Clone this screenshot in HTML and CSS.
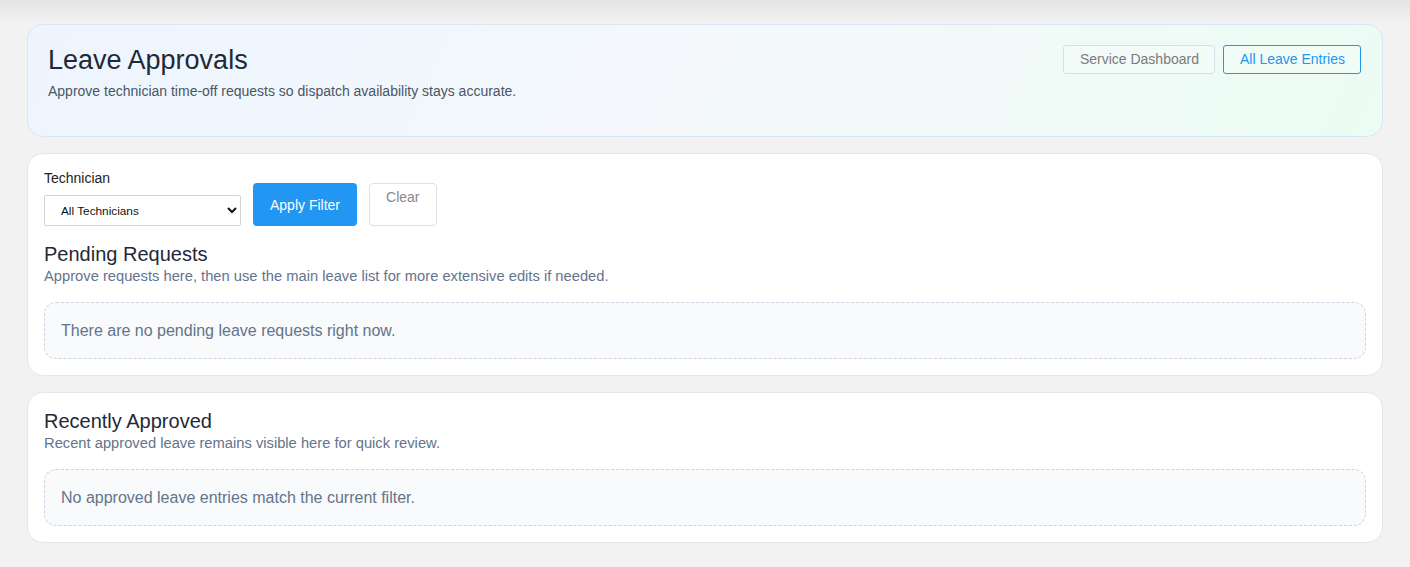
FILE: index.html
```html
<!DOCTYPE html>
<html lang="en">
<head>
    <meta charset="UTF-8">
    <meta name="viewport" content="width=device-width, initial-scale=1.0">
    <title>Leave Approvals</title>
    <link rel="stylesheet" href="styles.css">
</head>
<body>
    <div class="page">
        <header class="hero">
            <div>
                <h1>Leave Approvals</h1>
                <p class="hero-sub">Approve technician time-off requests so dispatch availability stays accurate.</p>
            </div>
            <div class="hero-actions">
                <a href="#" class="btn-outline">Service Dashboard</a>
                <a href="#" class="btn-outline primary">All Leave Entries</a>
            </div>
        </header>

        <section class="card">
            <form class="filter-form" onsubmit="event.preventDefault()">
                <div class="field">
                    <label for="technician">Technician</label>
                    <select id="technician">
                        <option>All Technicians</option>
                    </select>
                </div>
                <button type="submit" class="btn-apply">Apply Filter</button>
                <a href="#" class="btn-clear">Clear</a>
            </form>

            <h2>Pending Requests</h2>
            <p class="section-sub">Approve requests here, then use the main leave list for more extensive edits if needed.</p>
            <div class="empty-box">There are no pending leave requests right now.</div>
        </section>

        <section class="card">
            <h2 class="first">Recently Approved</h2>
            <p class="section-sub">Recent approved leave remains visible here for quick review.</p>
            <div class="empty-box">No approved leave entries match the current filter.</div>
        </section>
    </div>
</body>
</html>
```

FILE: styles.css
```css
body {
    font-family: "Liberation Sans", Arial, sans-serif;
    background: linear-gradient(#e4e4e4 0px, #f2f2f2 22px) no-repeat, #f2f2f2;
    color: #1f2937;
    margin: 0;
    padding: 0;
}

.page {
    padding: 24px 27px;
    display: flex;
    flex-direction: column;
    gap: 16px;
}

.hero {
    display: flex;
    justify-content: space-between;
    align-items: flex-start;
    padding: 20px 21px 22px 20px;
    border: 1px solid #d9e6f5;
    border-radius: 16px;
    background: linear-gradient(115deg, #eef5ff 0%, #f4f8fb 50%, #ebfcf3 100%);
}

h1 {
    margin: 0;
    font-size: 27px;
    font-weight: 400;
    line-height: 31px;
    color: #1f2937;
}

.hero-sub {
    margin: 7px 0 14px;
    font-size: 14px;
    line-height: 17px;
    color: #4b5563;
}

.hero-actions {
    display: flex;
    gap: 8px;
}

.btn-outline {
    display: inline-block;
    height: 29px;
    line-height: 27px;
    padding: 0 15px 0 16px;
    box-sizing: border-box;
    font-size: 14px;
    color: #7a7a7a;
    text-decoration: none;
    border: 1px solid #d5e1ea;
    border-radius: 3px;
    background: rgba(255, 255, 255, 0.25);
}

.btn-outline.primary {
    color: #2196f3;
    border-color: #2196f3;
}

.card {
    background: #fff;
    border: 1px solid #e2e8f0;
    border-radius: 16px;
    padding: 16px;
}

.filter-form {
    display: flex;
    align-items: flex-end;
    gap: 12px;
}

.field {
    display: flex;
    flex-direction: column;
}

label {
    font-size: 14px;
    line-height: 17px;
    color: #222;
    margin-bottom: 8px;
}

select {
    width: 197px;
    height: 31px;
    padding: 0 12px;
    font-family: "Liberation Sans", Arial, sans-serif;
    font-size: 11.8px;
    color: #111;
    background: #fff;
    border: 1px solid #d4d4d4;
    border-radius: 2px;
}

.btn-apply {
    height: 43px;
    padding: 0 17px;
    font-family: inherit;
    font-size: 14px;
    color: #fff;
    background-color: #2196f3;
    border: none;
    border-radius: 4px;
    cursor: pointer;
}

.btn-clear {
    display: inline-block;
    height: 43px;
    box-sizing: border-box;
    padding: 5px 16px 0 16px;
    font-size: 14px;
    line-height: 17px;
    color: #888;
    text-decoration: none;
    border: 1px solid #e0e0e0;
    border-radius: 4px;
}

h2 {
    margin: 16px 0 0;
    font-size: 20px;
    font-weight: 400;
    line-height: 24px;
    color: #1f2937;
}

h2.first {
    margin-top: 0;
}

.section-sub {
    margin: 1px 0 16px;
    font-size: 14.72px;
    line-height: 19px;
    color: #64748b;
}

.empty-box {
    padding: 18px 16px;
    font-size: 16px;
    line-height: 19px;
    color: #64748b;
    background: #f8fafc;
    border: 1px dashed #cbd5e1;
    border-radius: 12px;
}
```
